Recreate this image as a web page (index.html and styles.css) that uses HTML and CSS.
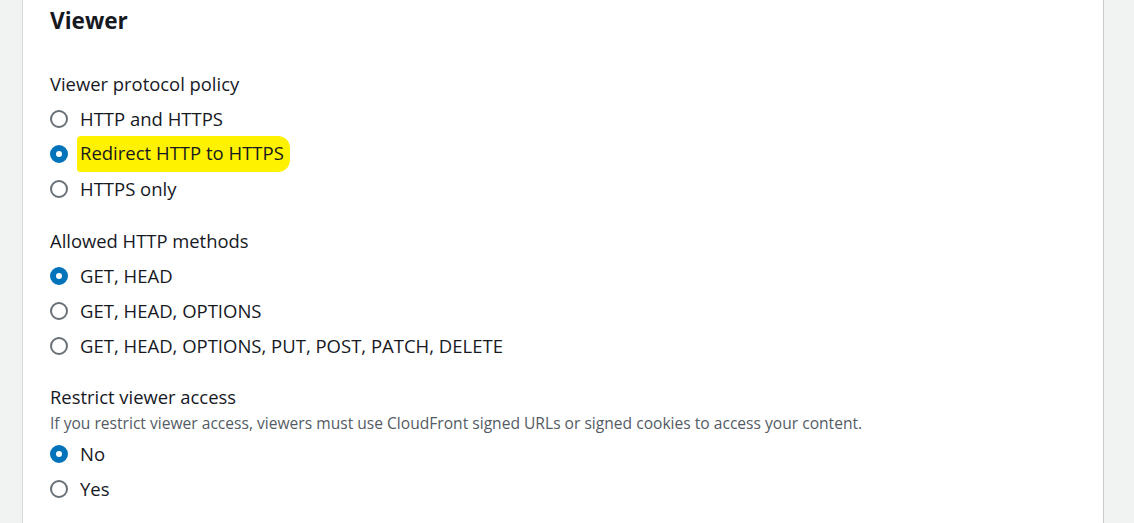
FILE: index.html
```html
<!DOCTYPE html>
<html>
<head>
<meta charset="utf-8">
<link rel="stylesheet" href="styles.css">
</head>
<body>
<div class="page">
  <div class="card">
    <h2 class="title">Viewer</h2>
    <div class="field first">
      <div class="label">Viewer protocol policy</div>
      <div class="options">
        <div class="opt"><span class="radio"></span><span class="text">HTTP and HTTPS</span></div>
        <div class="opt"><span class="radio on"></span><span class="text mark">Redirect HTTP to HTTPS</span></div>
        <div class="opt"><span class="radio"></span><span class="text">HTTPS only</span></div>
      </div>
    </div>
    <div class="field">
      <div class="label">Allowed HTTP methods</div>
      <div class="options">
        <div class="opt"><span class="radio on"></span><span class="text">GET, HEAD</span></div>
        <div class="opt"><span class="radio"></span><span class="text">GET, HEAD, OPTIONS</span></div>
        <div class="opt"><span class="radio"></span><span class="text">GET, HEAD, OPTIONS, PUT, POST, PATCH, DELETE</span></div>
      </div>
    </div>
    <div class="field last">
      <div class="label">Restrict viewer access</div>
      <div class="desc">If you restrict viewer access, viewers must use CloudFront signed URLs or signed cookies to access your content.</div>
      <div class="options tight">
        <div class="opt"><span class="radio on"></span><span class="text">No</span></div>
        <div class="opt"><span class="radio"></span><span class="text">Yes</span></div>
      </div>
    </div>
  </div>
</div>
</body>
</html>
```
FILE: styles.css
```css
html, body {
  margin: 0;
  padding: 0;
  height: 100%;
  background: #f1f3f3;
}
body {
  font-family: "Open Sans", Roboto, sans-serif;
  color: #16191f;
  overflow: hidden;
}
.page {
  height: 523px;
  padding: 0 30px 0 22px;
}
.card {
  height: 100%;
  background: #fff;
  border-left: 1px solid #d5d9d9;
  border-right: 1px solid #c6cbcb;
  padding: 0 0 0 27px;
  box-sizing: border-box;
}
.title {
  margin: 0;
  padding-top: 5px;
  font-size: 22.6px;
  font-weight: 700;
  line-height: 32px;
  color: #16191f;
}
.field {
  margin-top: 22px;
}
.field.first {
  margin-top: 34px;
}
.field.last {
  margin-top: 21px;
}
.label {
  font-size: 18.4px;
  line-height: 26px;
}
.desc {
  font-size: 15.6px;
  line-height: 26px;
  color: #545b64;
}
.options {
  display: flex;
  flex-direction: column;
  margin-top: 4px;
}
.options.tight {
  margin-top: 0;
}
.opt {
  display: flex;
  align-items: center;
  height: 35px;
  font-size: 18.5px;
}
.radio {
  width: 18px;
  height: 18px;
  border: 2px solid #687078;
  border-radius: 50%;
  box-sizing: border-box;
  margin-right: 12px;
  background: #fff;
  flex: none;
}
.radio.on {
  border: 6px solid #0073bb;
}
.text {
  line-height: 26px;
}
.mark {
  background: #fff200;
  padding: 4px 6px 6px 3px;
  margin-left: -3px;
  border-radius: 4px 12px 12px 3px;
}
```
